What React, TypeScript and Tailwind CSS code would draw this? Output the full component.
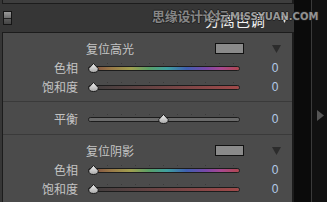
const TICKS = [0, 1, 2, 3, 4, 5, 6, 7, 8, 9, 10]

const HUE =
  'bg-[linear-gradient(to_right,#7a4640,#9a7a48_15%,#a0a050_28%,#5aa068_40%,#3fa0a0_52%,#4060b0_65%,#7a48a8_78%,#a84890_88%,#b04850)]'
const SAT = 'bg-[linear-gradient(to_right,#3e3e3e,#a04a4a)]'
const BAL = 'bg-[#6a6a6a]'

function Thumb({ left }: { left: number }) {
  return (
    <svg width="11" height="10" viewBox="0 0 11 10" className="absolute top-[5px]" style={{ left }}>
      <defs>
        <linearGradient id="tg" x1="0" y1="0" x2="0" y2="1">
          <stop offset="0" stopColor="#f2f2f2" />
          <stop offset="1" stopColor="#a8a8a8" />
        </linearGradient>
      </defs>
      <path
        d="M5.5 0.5 L10.2 5.5 C10.5 8 9 9.5 5.5 9.5 C2 9.5 0.5 8 0.8 5.5 Z"
        fill="url(#tg)"
        stroke="#1a1a1a"
        strokeWidth="1"
      />
    </svg>
  )
}

function Row({ label, track, thumb = 0 }: { label: string; track: string; thumb?: number }) {
  return (
    <div className="flex h-[19px] items-center">
      <span className="w-[75px] text-right text-[12px] leading-none text-[#c4c4c4]">{label}</span>
      <div className="relative ml-[10px] h-[19px] w-[152px]">
        <div className="mt-[5px] flex h-[1px] gap-[13px] pl-[5px]">
          {TICKS.map((t) => (
            <span key={t} className="h-[1px] w-[1px] bg-[#3a3a3a]" />
          ))}
        </div>
        <div className="mt-[2px] h-[5px] rounded-full border border-[#1c1c1c]">
          <div className={`h-full w-full rounded-full ${track}`} />
        </div>
        <Thumb left={thumb} />
      </div>
      <span className="ml-[22px] w-[26px] text-center text-[12px] leading-none text-[#b4cbe8] [font-family:'Liberation_Sans',sans-serif]">
        0
      </span>
    </div>
  )
}

function Heading({ label }: { label: string }) {
  return (
    <div className="flex h-[19px] items-center pl-[83px]">
      <span className="w-[129px] text-[12px] leading-none text-[#c4c4c4]">{label}</span>
      <span className="h-[11px] w-[29px] border border-[#111] bg-[#8a8a8a]" />
      <svg width="9" height="8" viewBox="0 0 9 8" className="ml-[28px]">
        <path d="M0 0 H9 L4.5 8 Z" fill="#2c2c2c" />
      </svg>
    </div>
  )
}

export default function App() {
  return (
    <div className="flex h-[202px] w-[327px] overflow-hidden bg-[#0b0b0b] [font-family:'Noto_Sans_CJK_SC',sans-serif]">
      <div className="flex w-[294px] flex-col bg-[#363636]">
        <div className="ml-[2px] h-[4px] w-[292px] border-b border-l border-r-2 border-[#1c1c1c] bg-[#3e3e3e]" />

        <div className="relative flex h-[28px] items-center">
          <div className="ml-[3px] flex h-[14px] w-[9px] flex-col border border-[#151515]">
            <div className="h-[6px] bg-[linear-gradient(#9a9a9a,#6e6e6e)]" />
            <div className="h-[1px] bg-[#222]" />
            <div className="flex-1 bg-[linear-gradient(#5a5a5a,#444)]" />
          </div>
          <span className="ml-[193px] mt-[3px] text-[15px] leading-none text-[#f2f2f2]">分离色调</span>
          <svg width="7" height="7" viewBox="0 0 7 7" className="ml-[16px] mt-[3px]">
            <path d="M0 0 H7 L3.5 7 Z" fill="#e0e0e0" />
          </svg>
          <span className="absolute left-[152px] top-[5px] text-[13px] font-bold leading-none tracking-[-0.3px] text-[#9a9a9a] opacity-80 [text-shadow:1px_0_#1e1e1e,-1px_0_#1e1e1e,0_1px_#1e1e1e,0_-1px_#1e1e1e]">
            思缘设计论坛
          </span>
          <span className="absolute left-[230px] top-[8px] text-[10px] font-bold leading-none text-[#a8a8a8] opacity-85 [font-family:'DejaVu_Sans',sans-serif] [text-shadow:1px_0_#1e1e1e,-1px_0_#1e1e1e,0_1px_#1e1e1e,0_-1px_#1e1e1e]">
            MISSYUAN.COM
          </span>
        </div>

        <div className="ml-[2px] flex w-[292px] flex-1 flex-col border-l border-r-2 border-t border-[#1c1c1c] bg-[#4b4b4b]">
          <div className="border-b border-[#3a3a3a] pb-[5px] pt-[6px]">
            <Heading label="复位高光" />
            <Row label="色相" track={HUE} />
            <Row label="饱和度" track={SAT} />
          </div>
          <div className="border-b border-[#3a3a3a] pb-[6px] pt-[7px]">
            <Row label="平衡" track={BAL} thumb={70} />
          </div>
          <div className="pt-[6px]">
            <Heading label="复位阴影" />
            <Row label="色相" track={HUE} />
            <Row label="饱和度" track={SAT} />
          </div>
        </div>
      </div>

      <div className="w-[17px] bg-[#0b0b0b]" />
      <div className="w-[1px] bg-[#3a3a3a]" />
      <div className="flex-1 bg-[#111] pl-[5px] pt-[110px]">
        <svg width="7" height="11" viewBox="0 0 7 11">
          <path d="M0 0 L7 5.5 L0 11 Z" fill="#555" />
        </svg>
      </div>
    </div>
  )
}
